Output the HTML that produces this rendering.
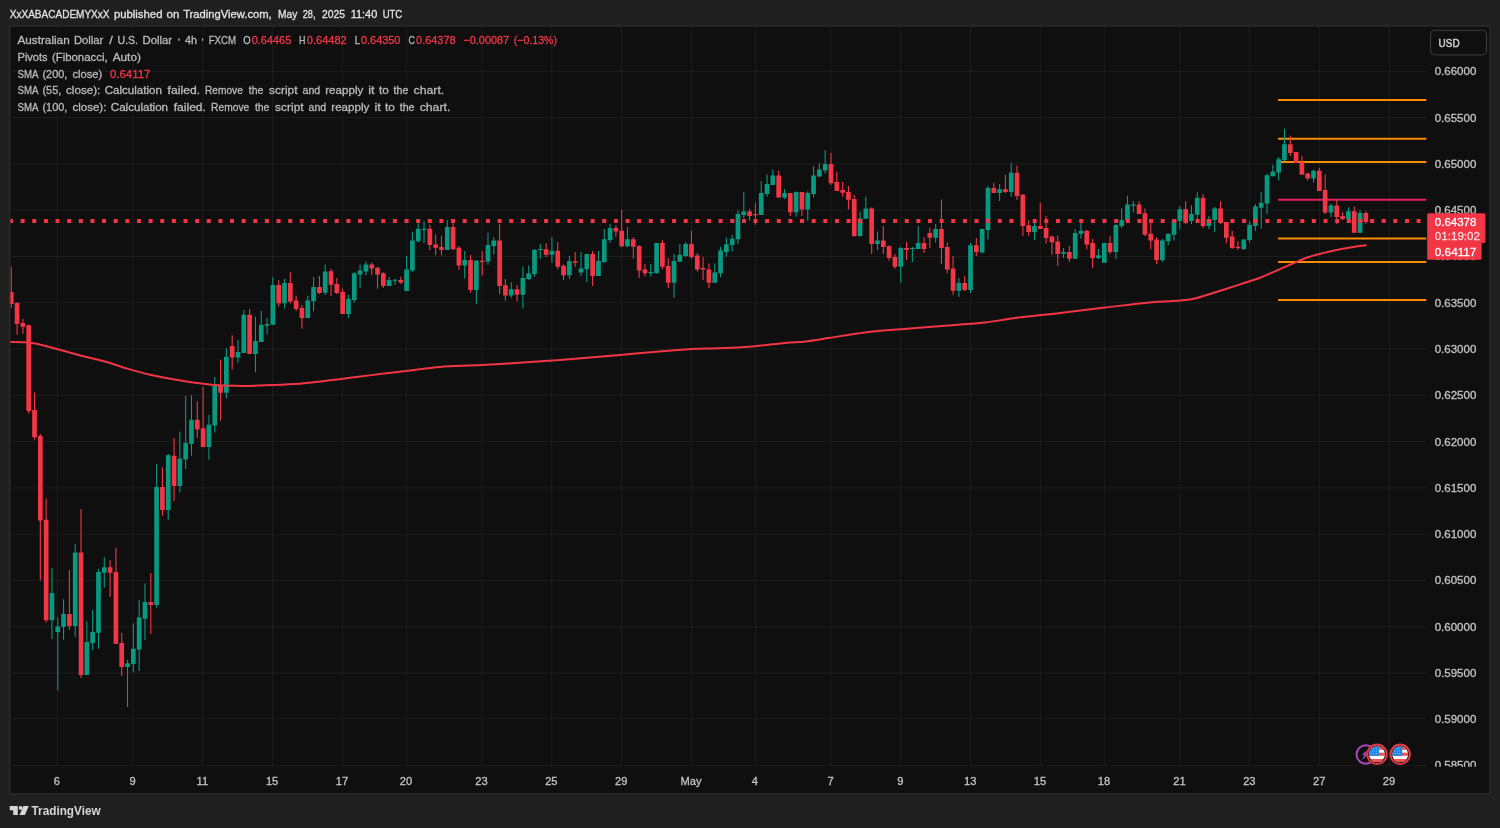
<!DOCTYPE html>
<html lang="en"><head><meta charset="utf-8"><title>AUDUSD 4h chart</title>
<style>html,body{margin:0;padding:0;background:#1f1f1f;}body{width:1500px;height:828px;overflow:hidden;}svg{display:block;will-change:transform;}text{font-family:"Liberation Sans",sans-serif;}</style>
</head><body>
<svg width="1500" height="828" viewBox="0 0 1500 828">
<rect x="0" y="0" width="1500" height="828" fill="#1f1f1f"/>
<rect x="9.70" y="26.00" width="1480.30" height="767.90" fill="#0f0f0f" stroke="#2c2c2c" stroke-width="1.4"/>
<defs><clipPath id="plot"><rect x="10.40" y="26.70" width="1415.90" height="739.00"/></clipPath></defs>
<g stroke="#ffffff" stroke-opacity="0.058" stroke-width="1" fill="none">
<line x1="57.30" y1="26.70" x2="57.30" y2="765.70"/>
<line x1="132.92" y1="26.70" x2="132.92" y2="765.70"/>
<line x1="202.72" y1="26.70" x2="202.72" y2="765.70"/>
<line x1="272.52" y1="26.70" x2="272.52" y2="765.70"/>
<line x1="342.33" y1="26.70" x2="342.33" y2="765.70"/>
<line x1="406.32" y1="26.70" x2="406.32" y2="765.70"/>
<line x1="481.94" y1="26.70" x2="481.94" y2="765.70"/>
<line x1="551.74" y1="26.70" x2="551.74" y2="765.70"/>
<line x1="621.54" y1="26.70" x2="621.54" y2="765.70"/>
<line x1="691.35" y1="26.70" x2="691.35" y2="765.70"/>
<line x1="755.34" y1="26.70" x2="755.34" y2="765.70"/>
<line x1="830.96" y1="26.70" x2="830.96" y2="765.70"/>
<line x1="900.76" y1="26.70" x2="900.76" y2="765.70"/>
<line x1="970.57" y1="26.70" x2="970.57" y2="765.70"/>
<line x1="1040.37" y1="26.70" x2="1040.37" y2="765.70"/>
<line x1="1104.36" y1="26.70" x2="1104.36" y2="765.70"/>
<line x1="1179.98" y1="26.70" x2="1179.98" y2="765.70"/>
<line x1="1249.78" y1="26.70" x2="1249.78" y2="765.70"/>
<line x1="1319.59" y1="26.70" x2="1319.59" y2="765.70"/>
<line x1="1389.39" y1="26.70" x2="1389.39" y2="765.70"/>
<line x1="10.40" y1="71.30" x2="1426.30" y2="71.30"/>
<line x1="10.40" y1="117.59" x2="1426.30" y2="117.59"/>
<line x1="10.40" y1="163.88" x2="1426.30" y2="163.88"/>
<line x1="10.40" y1="210.17" x2="1426.30" y2="210.17"/>
<line x1="10.40" y1="256.46" x2="1426.30" y2="256.46"/>
<line x1="10.40" y1="302.75" x2="1426.30" y2="302.75"/>
<line x1="10.40" y1="349.04" x2="1426.30" y2="349.04"/>
<line x1="10.40" y1="395.33" x2="1426.30" y2="395.33"/>
<line x1="10.40" y1="441.62" x2="1426.30" y2="441.62"/>
<line x1="10.40" y1="487.91" x2="1426.30" y2="487.91"/>
<line x1="10.40" y1="534.20" x2="1426.30" y2="534.20"/>
<line x1="10.40" y1="580.49" x2="1426.30" y2="580.49"/>
<line x1="10.40" y1="626.78" x2="1426.30" y2="626.78"/>
<line x1="10.40" y1="673.07" x2="1426.30" y2="673.07"/>
<line x1="10.40" y1="718.76" x2="1426.30" y2="718.76"/>
<line x1="10.40" y1="765.65" x2="1426.30" y2="765.65"/>
</g>
<g stroke-width="2" fill="none">
<line x1="1278.1" y1="100.00" x2="1426.3" y2="100.00" stroke="#fb8c00"/>
<line x1="1278.1" y1="138.70" x2="1426.3" y2="138.70" stroke="#fb8c00"/>
<line x1="1278.1" y1="162.10" x2="1426.3" y2="162.10" stroke="#fb8c00"/>
<line x1="1278.1" y1="199.70" x2="1426.3" y2="199.70" stroke="#e91e63"/>
<line x1="1278.1" y1="238.60" x2="1426.3" y2="238.60" stroke="#fb8c00"/>
<line x1="1278.1" y1="262.00" x2="1426.3" y2="262.00" stroke="#fb8c00"/>
<line x1="1278.1" y1="299.90" x2="1426.3" y2="299.90" stroke="#fb8c00"/>
</g>
<g clip-path="url(#plot)">
<path d="M51.96 568.00V638.90M57.77 617.60V690.40M63.58 599.20V639.70M75.21 544.00V636.80M86.84 621.30V674.90M92.65 609.80V649.90M98.47 569.10V648.80M104.28 557.30V587.70M127.53 660.00V706.90M133.35 623.20V672.00M139.16 600.00V670.90M144.98 583.50V640.00M156.60 464.30V607.80M168.23 454.00V519.70M179.86 431.40V492.50M185.67 396.00V469.10M191.48 395.20V455.70M208.93 415.00V459.70M214.74 377.10V432.50M226.37 348.00V398.40M237.99 340.00V362.70M243.81 309.90V353.10M255.44 316.80V372.30M261.25 310.90V342.10M267.06 318.00V334.40M272.88 277.10V324.80M284.50 278.90V308.40M307.76 295.70V318.00M313.57 277.10V311.20M325.20 264.50V294.90M348.45 294.70V318.00M354.27 272.30V302.60M360.08 264.50V288.00M365.90 261.60V275.20M389.15 277.10V286.10M394.96 278.90V284.80M406.59 256.00V290.90M412.41 231.70V271.70M418.22 223.20V242.40M424.03 220.80V243.20M447.29 220.00V249.90M464.73 250.90V278.40M476.36 260.00V303.70M487.98 232.50V264.80M493.80 237.20V254.80M511.24 282.00V297.70M522.87 266.80V308.40M528.68 265.50V279.90M534.49 248.90V276.40M540.31 244.10V258.80M551.93 237.20V262.80M569.38 256.10V279.10M581.00 252.10V276.10M586.82 254.00V282.30M598.44 251.10V276.10M604.26 228.90V262.80M610.07 224.10V243.10M627.51 227.10V247.30M650.77 263.90V276.40M656.58 243.10V273.20M674.02 254.00V297.70M679.84 244.10V261.70M685.65 242.00V256.90M714.72 263.60V282.80M720.53 246.80V277.20M726.35 237.40V256.70M732.16 234.70V251.50M737.97 210.40V244.00M743.79 192.00V217.90M761.23 181.10V214.90M767.04 174.40V196.80M772.85 169.60V185.10M784.48 189.10V198.90M796.11 191.20V216.80M807.74 191.20V220.80M813.55 165.90V197.60M819.36 162.90V177.30M825.18 149.90V173.60M860.06 212.00V236.80M865.87 196.80V218.70M877.50 231.50V250.10M900.76 246.80V283.10M912.38 246.90V262.00M918.20 226.00V248.90M935.64 224.10V242.50M958.89 278.00V296.90M970.52 243.10V292.90M982.15 228.90V253.20M987.96 186.00V239.60M999.59 183.90V200.90M1011.22 162.80V196.90M1034.47 222.80V239.90M1063.54 248.10V258.00M1075.17 228.90V258.80M1080.98 222.80V238.80M1098.42 248.90V259.10M1104.24 243.10V262.80M1115.86 224.10V259.10M1121.68 208.20V227.90M1127.49 195.80V220.10M1133.30 201.20V212.40M1162.37 239.10V262.00M1168.19 233.70V245.20M1174.00 219.10V240.40M1179.81 206.00V228.90M1191.44 205.20V224.10M1197.25 191.90V218.80M1208.88 216.10V228.90M1214.70 207.10V231.90M1243.76 239.20V250.00M1249.58 221.10V242.40M1255.39 204.00V230.90M1261.21 192.00V228.80M1267.02 173.60V214.10M1272.83 164.80V176.30M1278.65 157.10V180.50M1284.46 128.80V161.10M1313.53 169.60V182.40M1330.97 203.70V217.10M1348.41 207.20V218.90M1360.04 210.10V232.80" stroke="#089981" stroke-width="1.1" fill="none"/>
<path d="M11.26 266.70V308.00M17.07 302.50V334.70M22.89 319.00V333.70M28.70 324.50V413.60M34.51 392.40V439.80M40.33 434.00V580.50M46.14 498.40V622.40M69.40 570.10V629.90M81.02 509.10V677.90M110.09 560.00V597.10M115.91 547.70V643.70M121.72 633.10V676.00M150.79 573.00V634.10M162.42 467.20V515.70M174.04 438.10V501.10M197.30 401.20V438.10M203.11 386.90V446.90M220.55 359.70V420.80M232.18 335.20V369.60M249.62 309.10V353.90M278.69 280.00V306.40M290.32 272.30V303.50M296.13 295.70V311.00M301.94 305.10V328.80M319.39 276.00V294.00M331.01 269.10V296.00M336.83 277.90V294.00M342.64 288.80V313.90M371.71 262.40V275.20M377.52 266.90V288.80M383.34 272.30V288.00M400.78 276.80V284.00M429.85 224.80V250.10M435.66 234.40V255.20M441.47 235.50V255.20M453.10 223.20V250.10M458.91 246.10V269.90M470.54 254.90V292.80M482.17 250.90V275.50M499.61 224.10V294.00M505.42 279.10V300.70M517.05 284.90V301.50M546.12 243.10V256.90M557.75 242.00V269.50M563.56 264.40V280.10M575.19 252.10V266.80M592.63 251.10V286.00M615.88 225.20V236.70M621.70 210.00V247.30M633.33 237.20V258.80M639.14 245.20V278.00M644.95 263.90V276.40M662.39 240.10V269.50M668.21 258.00V287.90M691.46 230.80V258.80M697.28 252.90V271.60M703.09 256.90V280.10M708.90 263.60V287.90M749.60 209.10V220.80M755.41 202.40V224.80M778.67 170.40V197.60M790.30 193.10V216.00M801.92 192.00V216.00M830.99 153.10V185.10M836.81 171.50V190.90M842.62 182.10V196.80M848.43 186.10V209.60M854.25 194.90V236.80M871.69 207.20V253.90M883.31 225.90V253.90M889.13 245.60V260.80M894.94 253.90V268.70M906.57 242.00V259.90M924.01 237.20V252.90M929.82 227.80V248.10M941.45 199.60V263.90M947.27 242.20V273.50M953.08 255.90V294.80M964.71 275.90V291.10M976.33 238.00V256.10M993.78 182.80V192.90M1005.40 175.10V192.90M1017.03 165.70V199.90M1022.84 194.00V235.90M1028.66 220.10V235.90M1040.28 202.50V228.90M1046.10 216.10V243.60M1051.91 235.60V254.80M1057.73 235.60V266.00M1069.35 246.00V262.00M1086.79 230.00V249.20M1092.61 239.10V267.90M1110.05 236.10V254.00M1139.12 201.20V214.00M1144.93 208.40V235.90M1150.75 220.10V249.20M1156.56 237.20V263.90M1185.63 201.20V224.10M1203.07 194.00V227.90M1220.51 201.20V224.10M1226.32 222.00V243.30M1232.14 230.80V248.90M1237.95 241.20V250.00M1290.27 135.70V156.00M1296.09 152.00V162.90M1301.90 156.00V174.70M1307.72 172.50V180.50M1319.34 167.70V190.90M1325.16 174.40V214.10M1336.78 200.00V224.00M1342.60 212.00V220.00M1354.22 206.40V232.80M1365.85 211.20V224.00" stroke="#f23645" stroke-width="1.1" fill="none"/>
<path d="M49.61 593.10h4.70v27.20h-4.70zM55.42 626.40h4.70v5.60h-4.70zM61.23 613.90h4.70v13.00h-4.70zM72.86 552.50h4.70v73.60h-4.70zM84.49 641.90h4.70v33.00h-4.70zM90.30 632.00h4.70v10.90h-4.70zM96.12 572.00h4.70v60.80h-4.70zM101.93 567.20h4.70v5.60h-4.70zM125.18 663.20h4.70v3.70h-4.70zM131.00 648.80h4.70v15.20h-4.70zM136.81 617.60h4.70v32.00h-4.70zM142.63 602.00h4.70v16.70h-4.70zM154.25 486.90h4.70v118.00h-4.70zM165.88 455.20h4.70v54.90h-4.70zM177.51 458.70h4.70v27.20h-4.70zM183.32 442.90h4.70v16.60h-4.70zM189.13 419.80h4.70v24.20h-4.70zM206.58 424.80h4.70v22.10h-4.70zM212.39 385.90h4.70v39.70h-4.70zM224.02 356.80h4.70v36.00h-4.70zM235.64 352.00h4.70v5.60h-4.70zM241.46 314.70h4.70v38.40h-4.70zM253.09 341.10h4.70v12.80h-4.70zM258.90 324.80h4.70v17.30h-4.70zM264.71 324.00h4.70v1.80h-4.70zM270.53 285.10h4.70v39.70h-4.70zM282.15 282.90h4.70v20.30h-4.70zM305.41 300.60h4.70v17.40h-4.70zM311.22 286.90h4.70v14.40h-4.70zM322.85 271.50h4.70v21.30h-4.70zM346.10 298.90h4.70v15.00h-4.70zM351.92 273.30h4.70v26.70h-4.70zM357.73 270.40h4.70v4.00h-4.70zM363.55 264.50h4.70v7.00h-4.70zM386.80 280.00h4.70v6.10h-4.70zM392.61 279.70h4.70v1.10h-4.70zM404.24 269.60h4.70v21.30h-4.70zM410.06 240.50h4.70v29.90h-4.70zM415.87 228.80h4.70v12.50h-4.70zM421.68 228.80h4.70v1.20h-4.70zM444.94 226.90h4.70v23.00h-4.70zM462.38 260.00h4.70v5.60h-4.70zM474.01 260.80h4.70v29.10h-4.70zM485.63 245.10h4.70v16.50h-4.70zM491.45 240.40h4.70v5.60h-4.70zM508.89 289.20h4.70v6.40h-4.70zM520.52 278.00h4.70v16.80h-4.70zM526.33 273.50h4.70v5.60h-4.70zM532.14 250.00h4.70v24.00h-4.70zM537.96 248.90h4.70v1.10h-4.70zM549.58 250.80h4.70v4.00h-4.70zM567.03 261.20h4.70v14.10h-4.70zM578.65 268.40h4.70v4.00h-4.70zM584.47 254.00h4.70v15.20h-4.70zM596.09 260.90h4.70v15.20h-4.70zM601.91 239.30h4.70v22.70h-4.70zM607.72 227.90h4.70v12.20h-4.70zM625.16 239.30h4.70v7.00h-4.70zM648.42 272.10h4.70v1.10h-4.70zM654.23 243.10h4.70v30.10h-4.70zM671.67 260.90h4.70v21.90h-4.70zM677.49 254.80h4.70v6.90h-4.70zM683.30 244.10h4.70v12.00h-4.70zM712.37 272.40h4.70v10.40h-4.70zM718.18 250.60h4.70v22.60h-4.70zM724.00 244.20h4.70v7.80h-4.70zM729.81 238.70h4.70v6.40h-4.70zM735.62 214.10h4.70v25.10h-4.70zM741.44 211.50h4.70v3.40h-4.70zM758.88 193.10h4.70v21.80h-4.70zM764.69 184.00h4.70v9.90h-4.70zM770.50 175.50h4.70v9.60h-4.70zM782.13 193.10h4.70v4.50h-4.70zM793.76 192.00h4.70v20.30h-4.70zM805.39 193.10h4.70v16.50h-4.70zM811.20 175.50h4.70v18.40h-4.70zM817.01 169.60h4.70v6.90h-4.70zM822.83 164.00h4.70v6.40h-4.70zM857.71 218.40h4.70v17.60h-4.70zM863.52 208.50h4.70v10.20h-4.70zM875.15 240.50h4.70v3.50h-4.70zM898.41 248.10h4.70v18.70h-4.70zM910.03 248.00h4.70v1.00h-4.70zM915.85 243.10h4.70v5.80h-4.70zM933.29 229.00h4.70v8.70h-4.70zM956.54 283.10h4.70v7.70h-4.70zM968.17 245.20h4.70v44.80h-4.70zM979.80 228.90h4.70v23.50h-4.70zM985.61 187.90h4.70v42.10h-4.70zM997.24 189.20h4.70v3.70h-4.70zM1008.87 172.70h4.70v19.20h-4.70zM1032.12 226.00h4.70v5.90h-4.70zM1061.19 252.10h4.70v1.60h-4.70zM1072.82 232.90h4.70v25.90h-4.70zM1078.63 230.80h4.70v2.90h-4.70zM1096.07 255.30h4.70v2.70h-4.70zM1101.89 243.10h4.70v19.70h-4.70zM1113.51 224.90h4.70v27.20h-4.70zM1119.33 220.10h4.70v5.90h-4.70zM1125.14 204.60h4.70v15.50h-4.70zM1130.95 204.40h4.70v1.30h-4.70zM1160.02 240.40h4.70v19.70h-4.70zM1165.84 233.70h4.70v7.50h-4.70zM1171.65 220.10h4.70v14.70h-4.70zM1177.46 209.20h4.70v11.70h-4.70zM1189.09 214.00h4.70v6.90h-4.70zM1194.90 197.70h4.70v17.10h-4.70zM1206.53 219.10h4.70v6.90h-4.70zM1212.35 208.40h4.70v11.70h-4.70zM1241.41 239.40h4.70v9.60h-4.70zM1247.23 224.80h4.70v15.20h-4.70zM1253.04 206.40h4.70v19.50h-4.70zM1258.86 202.70h4.70v5.00h-4.70zM1264.67 175.20h4.70v28.30h-4.70zM1270.48 171.50h4.70v4.80h-4.70zM1276.30 159.20h4.70v13.30h-4.70zM1282.11 144.30h4.70v15.70h-4.70zM1311.18 170.70h4.70v7.70h-4.70zM1328.62 205.60h4.70v6.90h-4.70zM1346.06 211.20h4.70v7.70h-4.70zM1357.69 213.10h4.70v19.70h-4.70z" fill="#089981"/>
<path d="M8.91 292.00h4.70v12.00h-4.70zM14.72 303.00h4.70v21.00h-4.70zM20.54 323.00h4.70v3.70h-4.70zM26.35 325.30h4.70v85.70h-4.70zM32.16 410.00h4.70v27.30h-4.70zM37.98 436.00h4.70v84.60h-4.70zM43.79 519.80h4.70v100.50h-4.70zM67.05 613.90h4.70v12.10h-4.70zM78.67 552.50h4.70v122.40h-4.70zM107.74 567.20h4.70v5.60h-4.70zM113.56 572.00h4.70v71.70h-4.70zM119.37 642.90h4.70v24.00h-4.70zM148.44 602.00h4.70v3.00h-4.70zM160.07 486.90h4.70v23.20h-4.70zM171.69 455.70h4.70v30.20h-4.70zM194.95 419.80h4.70v9.70h-4.70zM200.76 428.30h4.70v18.60h-4.70zM218.20 385.90h4.70v6.90h-4.70zM229.83 346.10h4.70v11.50h-4.70zM247.27 314.70h4.70v39.20h-4.70zM276.34 285.10h4.70v18.10h-4.70zM287.97 282.90h4.70v18.60h-4.70zM293.78 300.50h4.70v8.40h-4.70zM299.59 308.10h4.70v9.90h-4.70zM317.04 286.90h4.70v6.20h-4.70zM328.66 271.20h4.70v13.60h-4.70zM334.48 284.00h4.70v9.10h-4.70zM340.29 292.00h4.70v21.90h-4.70zM369.36 264.50h4.70v4.00h-4.70zM375.17 267.70h4.70v6.70h-4.70zM380.99 273.30h4.70v12.80h-4.70zM398.43 280.00h4.70v2.40h-4.70zM427.50 228.80h4.70v16.30h-4.70zM433.31 244.50h4.70v3.20h-4.70zM439.12 246.90h4.70v3.00h-4.70zM450.75 226.90h4.70v22.40h-4.70zM456.56 247.70h4.70v17.90h-4.70zM468.19 260.00h4.70v29.90h-4.70zM479.82 260.80h4.70v1.30h-4.70zM497.26 240.40h4.70v45.60h-4.70zM503.07 285.20h4.70v10.40h-4.70zM514.70 289.20h4.70v5.60h-4.70zM543.77 249.20h4.70v5.60h-4.70zM555.40 250.80h4.70v16.00h-4.70zM561.21 265.70h4.70v9.60h-4.70zM572.84 261.20h4.70v1.60h-4.70zM590.28 254.00h4.70v22.10h-4.70zM613.53 227.90h4.70v3.70h-4.70zM619.35 230.80h4.70v15.50h-4.70zM630.98 239.30h4.70v7.50h-4.70zM636.79 246.00h4.70v24.50h-4.70zM642.60 269.50h4.70v3.70h-4.70zM660.04 243.10h4.70v23.70h-4.70zM665.86 266.00h4.70v16.80h-4.70zM689.11 244.10h4.70v12.80h-4.70zM694.93 255.60h4.70v13.90h-4.70zM700.74 268.10h4.70v1.40h-4.70zM706.55 269.50h4.70v13.30h-4.70zM747.25 211.50h4.70v4.50h-4.70zM753.06 213.90h4.70v1.30h-4.70zM776.32 175.50h4.70v22.10h-4.70zM787.95 193.10h4.70v19.20h-4.70zM799.57 192.00h4.70v17.60h-4.70zM828.64 164.00h4.70v19.20h-4.70zM834.46 182.10h4.70v8.80h-4.70zM840.27 190.10h4.70v2.70h-4.70zM846.08 192.00h4.70v7.70h-4.70zM851.90 198.90h4.70v37.10h-4.70zM869.34 208.50h4.70v35.50h-4.70zM880.96 240.50h4.70v6.40h-4.70zM886.78 246.10h4.70v12.00h-4.70zM892.59 257.10h4.70v9.70h-4.70zM904.22 248.00h4.70v2.00h-4.70zM921.66 243.10h4.70v5.80h-4.70zM927.47 232.90h4.70v4.80h-4.70zM939.10 229.00h4.70v19.10h-4.70zM944.92 247.10h4.70v22.40h-4.70zM950.73 268.40h4.70v22.40h-4.70zM962.36 283.10h4.70v6.90h-4.70zM973.98 245.20h4.70v6.90h-4.70zM991.43 187.90h4.70v5.00h-4.70zM1003.05 189.20h4.70v2.70h-4.70zM1014.68 172.70h4.70v23.30h-4.70zM1020.49 194.80h4.70v31.20h-4.70zM1026.31 225.20h4.70v6.70h-4.70zM1037.93 226.00h4.70v2.90h-4.70zM1043.75 227.90h4.70v10.10h-4.70zM1049.56 236.40h4.70v5.90h-4.70zM1055.38 241.50h4.70v12.50h-4.70zM1067.00 252.10h4.70v6.70h-4.70zM1084.44 230.80h4.70v13.60h-4.70zM1090.26 243.10h4.70v14.90h-4.70zM1107.70 243.10h4.70v9.00h-4.70zM1136.77 204.40h4.70v9.60h-4.70zM1142.58 213.20h4.70v21.60h-4.70zM1148.40 233.70h4.70v6.70h-4.70zM1154.21 239.60h4.70v20.50h-4.70zM1183.28 209.20h4.70v13.60h-4.70zM1200.72 197.70h4.70v28.30h-4.70zM1218.16 208.40h4.70v14.40h-4.70zM1223.97 222.00h4.70v15.70h-4.70zM1229.79 236.40h4.70v11.70h-4.70zM1235.60 246.80h4.70v1.10h-4.70zM1287.92 144.30h4.70v8.80h-4.70zM1293.74 152.00h4.70v10.90h-4.70zM1299.55 161.90h4.70v12.80h-4.70zM1305.37 173.60h4.70v4.80h-4.70zM1316.99 170.70h4.70v20.20h-4.70zM1322.81 189.90h4.70v22.60h-4.70zM1334.43 205.60h4.70v11.50h-4.70zM1340.25 216.00h4.70v2.90h-4.70zM1351.87 211.20h4.70v21.60h-4.70zM1363.50 213.10h4.70v8.80h-4.70z" fill="#f23645"/>
<path d="M8.00 342.00C12.00 342.17 23.70 341.78 32.00 343.00C40.30 344.22 49.22 347.10 57.80 349.30C66.38 351.50 75.20 354.05 83.50 356.20C91.80 358.35 100.18 360.08 107.60 362.20C115.02 364.32 120.93 366.82 128.00 368.90C135.07 370.98 141.00 372.72 150.00 374.70C159.00 376.68 171.33 379.08 182.00 380.80C192.67 382.52 204.33 384.15 214.00 385.00C223.67 385.85 232.33 385.82 240.00 385.90C247.67 385.98 251.00 385.82 260.00 385.50C269.00 385.18 283.00 384.78 294.00 384.00C305.00 383.22 315.33 382.00 326.00 380.80C336.67 379.60 349.00 377.92 358.00 376.80C367.00 375.68 371.33 375.15 380.00 374.10C388.67 373.05 400.00 371.70 410.00 370.50C420.00 369.30 428.00 367.80 440.00 366.90C452.00 366.00 467.00 365.90 482.00 365.10C497.00 364.30 514.50 363.15 530.00 362.10C545.50 361.05 560.00 360.00 575.00 358.80C590.00 357.60 605.00 356.20 620.00 354.90C635.00 353.60 653.00 352.00 665.00 351.00C677.00 350.00 682.00 349.40 692.00 348.90C702.00 348.40 714.50 348.45 725.00 348.00C735.50 347.55 745.00 347.05 755.00 346.20C765.00 345.35 776.50 343.70 785.00 342.90C793.50 342.10 798.50 342.25 806.00 341.40C813.50 340.55 820.17 339.30 830.00 337.80C839.83 336.30 851.67 333.95 865.00 332.40C878.33 330.85 895.00 329.75 910.00 328.50C925.00 327.25 942.50 325.90 955.00 324.90C967.50 323.90 975.00 323.65 985.00 322.50C995.00 321.35 1002.50 319.60 1015.00 318.00C1027.50 316.40 1045.00 314.65 1060.00 312.90C1075.00 311.15 1090.00 309.25 1105.00 307.50C1120.00 305.75 1137.50 303.55 1150.00 302.40C1162.50 301.25 1172.50 301.25 1180.00 300.60C1187.50 299.95 1190.00 299.60 1195.00 298.50C1200.00 297.40 1202.50 296.35 1210.00 294.00C1217.50 291.65 1231.67 287.12 1240.00 284.40C1248.33 281.68 1254.00 279.97 1260.00 277.70C1266.00 275.43 1270.67 273.10 1276.00 270.80C1281.33 268.50 1286.67 266.17 1292.00 263.90C1297.33 261.63 1302.67 259.03 1308.00 257.20C1313.33 255.37 1318.67 254.23 1324.00 252.90C1329.33 251.57 1334.67 250.27 1340.00 249.20C1345.33 248.13 1351.68 247.17 1356.00 246.50C1360.32 245.83 1364.25 245.42 1365.90 245.20" fill="none" stroke="#f23645" stroke-width="2" stroke-linejoin="round" stroke-linecap="round"/>
</g>
<path d="M1416.60 219h4v4h-4zM1404.97 219h4v4h-4zM1393.33 219h4v4h-4zM1381.70 219h4v4h-4zM1370.07 219h4v4h-4zM1358.43 219h4v4h-4zM1346.80 219h4v4h-4zM1335.17 219h4v4h-4zM1323.54 219h4v4h-4zM1311.90 219h4v4h-4zM1300.27 219h4v4h-4zM1288.64 219h4v4h-4zM1277.00 219h4v4h-4zM1265.37 219h4v4h-4zM1253.74 219h4v4h-4zM1242.10 219h4v4h-4zM1230.47 219h4v4h-4zM1218.84 219h4v4h-4zM1207.21 219h4v4h-4zM1195.57 219h4v4h-4zM1183.94 219h4v4h-4zM1172.31 219h4v4h-4zM1160.67 219h4v4h-4zM1149.04 219h4v4h-4zM1137.41 219h4v4h-4zM1125.77 219h4v4h-4zM1114.14 219h4v4h-4zM1102.51 219h4v4h-4zM1090.88 219h4v4h-4zM1079.24 219h4v4h-4zM1067.61 219h4v4h-4zM1055.98 219h4v4h-4zM1044.34 219h4v4h-4zM1032.71 219h4v4h-4zM1021.08 219h4v4h-4zM1009.44 219h4v4h-4zM997.81 219h4v4h-4zM986.18 219h4v4h-4zM974.55 219h4v4h-4zM962.91 219h4v4h-4zM951.28 219h4v4h-4zM939.65 219h4v4h-4zM928.01 219h4v4h-4zM916.38 219h4v4h-4zM904.75 219h4v4h-4zM893.11 219h4v4h-4zM881.48 219h4v4h-4zM869.85 219h4v4h-4zM858.22 219h4v4h-4zM846.58 219h4v4h-4zM834.95 219h4v4h-4zM823.32 219h4v4h-4zM811.68 219h4v4h-4zM800.05 219h4v4h-4zM788.42 219h4v4h-4zM776.78 219h4v4h-4zM765.15 219h4v4h-4zM753.52 219h4v4h-4zM741.89 219h4v4h-4zM730.25 219h4v4h-4zM718.62 219h4v4h-4zM706.99 219h4v4h-4zM695.35 219h4v4h-4zM683.72 219h4v4h-4zM672.09 219h4v4h-4zM660.45 219h4v4h-4zM648.82 219h4v4h-4zM637.19 219h4v4h-4zM625.56 219h4v4h-4zM613.92 219h4v4h-4zM602.29 219h4v4h-4zM590.66 219h4v4h-4zM579.02 219h4v4h-4zM567.39 219h4v4h-4zM555.76 219h4v4h-4zM544.12 219h4v4h-4zM532.49 219h4v4h-4zM520.86 219h4v4h-4zM509.23 219h4v4h-4zM497.59 219h4v4h-4zM485.96 219h4v4h-4zM474.33 219h4v4h-4zM462.69 219h4v4h-4zM451.06 219h4v4h-4zM439.43 219h4v4h-4zM427.79 219h4v4h-4zM416.16 219h4v4h-4zM404.53 219h4v4h-4zM392.90 219h4v4h-4zM381.26 219h4v4h-4zM369.63 219h4v4h-4zM358.00 219h4v4h-4zM346.36 219h4v4h-4zM334.73 219h4v4h-4zM323.10 219h4v4h-4zM311.46 219h4v4h-4zM299.83 219h4v4h-4zM288.20 219h4v4h-4zM276.57 219h4v4h-4zM264.93 219h4v4h-4zM253.30 219h4v4h-4zM241.67 219h4v4h-4zM230.03 219h4v4h-4zM218.40 219h4v4h-4zM206.77 219h4v4h-4zM195.13 219h4v4h-4zM183.50 219h4v4h-4zM171.87 219h4v4h-4zM160.24 219h4v4h-4zM148.60 219h4v4h-4zM136.97 219h4v4h-4zM125.34 219h4v4h-4zM113.70 219h4v4h-4zM102.07 219h4v4h-4zM90.44 219h4v4h-4zM78.80 219h4v4h-4zM67.17 219h4v4h-4zM55.54 219h4v4h-4zM43.91 219h4v4h-4zM32.27 219h4v4h-4zM20.64 219h4v4h-4zM9.01 219h4v4h-4z" fill="#f23645" clip-path="url(#plot)"/>
<defs><clipPath id="axis"><rect x="1426.3" y="27" width="64" height="739.80"/></clipPath></defs>
<g clip-path="url(#axis)">
<text x="1434.70" y="75.25" font-size="11.50" fill="#c4c4c4" stroke="#c4c4c4" stroke-width="0.30" textLength="41.60" lengthAdjust="spacingAndGlyphs">0.66000</text>
<text x="1434.70" y="121.54" font-size="11.50" fill="#c4c4c4" stroke="#c4c4c4" stroke-width="0.30" textLength="41.60" lengthAdjust="spacingAndGlyphs">0.65500</text>
<text x="1434.70" y="167.83" font-size="11.50" fill="#c4c4c4" stroke="#c4c4c4" stroke-width="0.30" textLength="41.60" lengthAdjust="spacingAndGlyphs">0.65000</text>
<text x="1434.70" y="214.12" font-size="11.50" fill="#c4c4c4" stroke="#c4c4c4" stroke-width="0.30" textLength="41.60" lengthAdjust="spacingAndGlyphs">0.64500</text>
<text x="1434.70" y="260.41" font-size="11.50" fill="#c4c4c4" stroke="#c4c4c4" stroke-width="0.30" textLength="41.60" lengthAdjust="spacingAndGlyphs">0.64000</text>
<text x="1434.70" y="306.70" font-size="11.50" fill="#c4c4c4" stroke="#c4c4c4" stroke-width="0.30" textLength="41.60" lengthAdjust="spacingAndGlyphs">0.63500</text>
<text x="1434.70" y="352.99" font-size="11.50" fill="#c4c4c4" stroke="#c4c4c4" stroke-width="0.30" textLength="41.60" lengthAdjust="spacingAndGlyphs">0.63000</text>
<text x="1434.70" y="399.28" font-size="11.50" fill="#c4c4c4" stroke="#c4c4c4" stroke-width="0.30" textLength="41.60" lengthAdjust="spacingAndGlyphs">0.62500</text>
<text x="1434.70" y="445.57" font-size="11.50" fill="#c4c4c4" stroke="#c4c4c4" stroke-width="0.30" textLength="41.60" lengthAdjust="spacingAndGlyphs">0.62000</text>
<text x="1434.70" y="491.86" font-size="11.50" fill="#c4c4c4" stroke="#c4c4c4" stroke-width="0.30" textLength="41.60" lengthAdjust="spacingAndGlyphs">0.61500</text>
<text x="1434.70" y="538.15" font-size="11.50" fill="#c4c4c4" stroke="#c4c4c4" stroke-width="0.30" textLength="41.60" lengthAdjust="spacingAndGlyphs">0.61000</text>
<text x="1434.70" y="584.44" font-size="11.50" fill="#c4c4c4" stroke="#c4c4c4" stroke-width="0.30" textLength="41.60" lengthAdjust="spacingAndGlyphs">0.60500</text>
<text x="1434.70" y="630.73" font-size="11.50" fill="#c4c4c4" stroke="#c4c4c4" stroke-width="0.30" textLength="41.60" lengthAdjust="spacingAndGlyphs">0.60000</text>
<text x="1434.70" y="677.02" font-size="11.50" fill="#c4c4c4" stroke="#c4c4c4" stroke-width="0.30" textLength="41.60" lengthAdjust="spacingAndGlyphs">0.59500</text>
<text x="1434.70" y="722.71" font-size="11.50" fill="#c4c4c4" stroke="#c4c4c4" stroke-width="0.30" textLength="41.60" lengthAdjust="spacingAndGlyphs">0.59000</text>
<text x="1434.70" y="769.20" font-size="11.50" fill="#c4c4c4" stroke="#c4c4c4" stroke-width="0.30" textLength="41.60" lengthAdjust="spacingAndGlyphs">0.58500</text>
</g>
<rect x="1427.2" y="213.2" width="58.2" height="29.8" rx="1.5" fill="#f23645"/>
<text x="1434.80" y="225.70" font-size="11.50" fill="#ffffff" stroke="#ffffff" stroke-width="0.30" textLength="41.60" lengthAdjust="spacingAndGlyphs">0.64378</text>
<text x="1434.80" y="239.50" font-size="11.50" fill="#ffffff" stroke="#ffffff" stroke-width="0.30" textLength="45.20" lengthAdjust="spacingAndGlyphs" fill-opacity="0.72" stroke-opacity="0.72">01:19:02</text>
<rect x="1427.2" y="242.0" width="54.4" height="17.8" rx="1.5" fill="#f23645"/>
<text x="1434.80" y="255.90" font-size="11.50" fill="#ffffff" stroke="#ffffff" stroke-width="0.30" textLength="41.60" lengthAdjust="spacingAndGlyphs">0.64117</text>
<rect x="1430.5" y="30.3" width="56" height="24.6" rx="4" fill="none" stroke="#3d3d3d" stroke-width="1"/>
<text x="1438.60" y="47.40" font-size="11.50" fill="#d0d0d0" stroke="#d0d0d0" stroke-width="0.50" textLength="21.00" lengthAdjust="spacingAndGlyphs">USD</text>
<text x="53.79" y="784.60" font-size="11.50" fill="#c4c4c4" stroke="#c4c4c4" stroke-width="0.30" textLength="6.21" lengthAdjust="spacingAndGlyphs">6</text>
<text x="129.41" y="784.60" font-size="11.50" fill="#c4c4c4" stroke="#c4c4c4" stroke-width="0.30" textLength="6.21" lengthAdjust="spacingAndGlyphs">9</text>
<text x="196.53" y="784.60" font-size="11.50" fill="#c4c4c4" stroke="#c4c4c4" stroke-width="0.30" textLength="11.58" lengthAdjust="spacingAndGlyphs">11</text>
<text x="265.92" y="784.60" font-size="11.50" fill="#c4c4c4" stroke="#c4c4c4" stroke-width="0.30" textLength="12.41" lengthAdjust="spacingAndGlyphs">15</text>
<text x="335.72" y="784.60" font-size="11.50" fill="#c4c4c4" stroke="#c4c4c4" stroke-width="0.30" textLength="12.41" lengthAdjust="spacingAndGlyphs">17</text>
<text x="399.71" y="784.60" font-size="11.50" fill="#c4c4c4" stroke="#c4c4c4" stroke-width="0.30" textLength="12.41" lengthAdjust="spacingAndGlyphs">20</text>
<text x="475.33" y="784.60" font-size="11.50" fill="#c4c4c4" stroke="#c4c4c4" stroke-width="0.30" textLength="12.41" lengthAdjust="spacingAndGlyphs">23</text>
<text x="545.13" y="784.60" font-size="11.50" fill="#c4c4c4" stroke="#c4c4c4" stroke-width="0.30" textLength="12.41" lengthAdjust="spacingAndGlyphs">25</text>
<text x="614.94" y="784.60" font-size="11.50" fill="#c4c4c4" stroke="#c4c4c4" stroke-width="0.30" textLength="12.41" lengthAdjust="spacingAndGlyphs">29</text>
<text x="680.41" y="784.60" font-size="11.50" fill="#c4c4c4" stroke="#c4c4c4" stroke-width="0.30" textLength="21.08" lengthAdjust="spacingAndGlyphs">May</text>
<text x="751.83" y="784.60" font-size="11.50" fill="#c4c4c4" stroke="#c4c4c4" stroke-width="0.30" textLength="6.21" lengthAdjust="spacingAndGlyphs">4</text>
<text x="827.45" y="784.60" font-size="11.50" fill="#c4c4c4" stroke="#c4c4c4" stroke-width="0.30" textLength="6.21" lengthAdjust="spacingAndGlyphs">7</text>
<text x="897.26" y="784.60" font-size="11.50" fill="#c4c4c4" stroke="#c4c4c4" stroke-width="0.30" textLength="6.21" lengthAdjust="spacingAndGlyphs">9</text>
<text x="963.96" y="784.60" font-size="11.50" fill="#c4c4c4" stroke="#c4c4c4" stroke-width="0.30" textLength="12.41" lengthAdjust="spacingAndGlyphs">13</text>
<text x="1033.76" y="784.60" font-size="11.50" fill="#c4c4c4" stroke="#c4c4c4" stroke-width="0.30" textLength="12.41" lengthAdjust="spacingAndGlyphs">15</text>
<text x="1097.75" y="784.60" font-size="11.50" fill="#c4c4c4" stroke="#c4c4c4" stroke-width="0.30" textLength="12.41" lengthAdjust="spacingAndGlyphs">18</text>
<text x="1173.37" y="784.60" font-size="11.50" fill="#c4c4c4" stroke="#c4c4c4" stroke-width="0.30" textLength="12.41" lengthAdjust="spacingAndGlyphs">21</text>
<text x="1243.17" y="784.60" font-size="11.50" fill="#c4c4c4" stroke="#c4c4c4" stroke-width="0.30" textLength="12.41" lengthAdjust="spacingAndGlyphs">23</text>
<text x="1312.98" y="784.60" font-size="11.50" fill="#c4c4c4" stroke="#c4c4c4" stroke-width="0.30" textLength="12.41" lengthAdjust="spacingAndGlyphs">27</text>
<text x="1382.78" y="784.60" font-size="11.50" fill="#c4c4c4" stroke="#c4c4c4" stroke-width="0.30" textLength="12.41" lengthAdjust="spacingAndGlyphs">29</text>
<text y="18.25" font-size="11.40" fill="#e4e4e4" stroke="#e4e4e4" stroke-width="0.30"><tspan x="9.80" textLength="99.68" lengthAdjust="spacingAndGlyphs">XxXABACADEMYXxX</tspan> <tspan x="113.90" textLength="48.61" lengthAdjust="spacingAndGlyphs">published</tspan> <tspan x="166.60" textLength="12.83" lengthAdjust="spacingAndGlyphs">on</tspan> <tspan x="183.20" textLength="88.52" lengthAdjust="spacingAndGlyphs">TradingView.com,</tspan> <tspan x="278.10" textLength="19.19" lengthAdjust="spacingAndGlyphs">May</tspan> <tspan x="302.70" textLength="12.80" lengthAdjust="spacingAndGlyphs">28,</tspan> <tspan x="321.90" textLength="23.05" lengthAdjust="spacingAndGlyphs">2025</tspan> <tspan x="350.70" textLength="26.58" lengthAdjust="spacingAndGlyphs">11:40</tspan> <tspan x="382.70" textLength="19.55" lengthAdjust="spacingAndGlyphs">UTC</tspan></text>
<text y="44.35" font-size="11.40" fill="#bcbcbc" stroke="#bcbcbc" stroke-width="0.30"><tspan x="17.50" textLength="52.16" lengthAdjust="spacingAndGlyphs">Australian</tspan> <tspan x="74.00" textLength="29.32" lengthAdjust="spacingAndGlyphs">Dollar</tspan> <tspan x="109.30" textLength="3.57" lengthAdjust="spacingAndGlyphs">/</tspan> <tspan x="117.50" textLength="20.55" lengthAdjust="spacingAndGlyphs">U.S.</tspan> <tspan x="142.50" textLength="29.62" lengthAdjust="spacingAndGlyphs">Dollar</tspan> <tspan x="178.00" dy="-0.90" textLength="1.92" lengthAdjust="spacingAndGlyphs" stroke-width="1.1">·</tspan> <tspan x="184.90" dy="0.90" textLength="12.02" lengthAdjust="spacingAndGlyphs">4h</tspan> <tspan x="201.50" dy="-0.90" textLength="2.12" lengthAdjust="spacingAndGlyphs" stroke-width="1.1">·</tspan> <tspan x="208.70" dy="0.90" textLength="27.43" lengthAdjust="spacingAndGlyphs">FXCM</tspan> <tspan x="243.30" textLength="7.38" lengthAdjust="spacingAndGlyphs">O</tspan> <tspan x="251.70" textLength="39.55" lengthAdjust="spacingAndGlyphs" fill="#f23645" stroke="#f23645">0.64465</tspan> <tspan x="299.10" textLength="6.42" lengthAdjust="spacingAndGlyphs">H</tspan> <tspan x="306.80" textLength="39.95" lengthAdjust="spacingAndGlyphs" fill="#f23645" stroke="#f23645">0.64482</tspan> <tspan x="354.70" textLength="4.87" lengthAdjust="spacingAndGlyphs">L</tspan> <tspan x="361.00" textLength="39.45" lengthAdjust="spacingAndGlyphs" fill="#f23645" stroke="#f23645">0.64350</tspan> <tspan x="408.40" textLength="6.32" lengthAdjust="spacingAndGlyphs">C</tspan> <tspan x="416.10" textLength="39.45" lengthAdjust="spacingAndGlyphs" fill="#f23645" stroke="#f23645">0.64378</tspan> <tspan x="463.40" textLength="45.78" lengthAdjust="spacingAndGlyphs" fill="#f23645" stroke="#f23645">−0.00087</tspan> <tspan x="513.80" textLength="43.25" lengthAdjust="spacingAndGlyphs" fill="#f23645" stroke="#f23645">(−0.13%)</tspan></text>
<text y="61.02" font-size="11.40" fill="#bcbcbc" stroke="#bcbcbc" stroke-width="0.30"><tspan x="17.50" textLength="30.13" lengthAdjust="spacingAndGlyphs">Pivots</tspan> <tspan x="51.90" textLength="55.70" lengthAdjust="spacingAndGlyphs">(Fibonacci,</tspan> <tspan x="112.70" textLength="28.20" lengthAdjust="spacingAndGlyphs">Auto)</tspan></text>
<text y="77.69" font-size="11.40" fill="#bcbcbc" stroke="#bcbcbc" stroke-width="0.30"><tspan x="17.50" textLength="20.47" lengthAdjust="spacingAndGlyphs">SMA</tspan> <tspan x="42.50" textLength="24.79" lengthAdjust="spacingAndGlyphs">(200,</tspan> <tspan x="72.40" textLength="29.87" lengthAdjust="spacingAndGlyphs">close)</tspan> <tspan x="110.00" textLength="40.30" lengthAdjust="spacingAndGlyphs" fill="#f23645" stroke="#f23645">0.64117</tspan></text>
<text y="94.36" font-size="11.40" fill="#bcbcbc" stroke="#bcbcbc" stroke-width="0.30"><tspan x="17.50" textLength="20.47" lengthAdjust="spacingAndGlyphs">SMA</tspan> <tspan x="42.50" textLength="18.73" lengthAdjust="spacingAndGlyphs">(55,</tspan> <tspan x="66.00" textLength="34.34" lengthAdjust="spacingAndGlyphs">close):</tspan> <tspan x="104.70" textLength="57.27" lengthAdjust="spacingAndGlyphs">Calculation</tspan> <tspan x="167.60" textLength="32.48" lengthAdjust="spacingAndGlyphs">failed.</tspan> <tspan x="204.90" textLength="37.94" lengthAdjust="spacingAndGlyphs">Remove</tspan> <tspan x="248.80" textLength="14.50" lengthAdjust="spacingAndGlyphs">the</tspan> <tspan x="269.00" textLength="28.49" lengthAdjust="spacingAndGlyphs">script</tspan> <tspan x="302.50" textLength="17.68" lengthAdjust="spacingAndGlyphs">and</tspan> <tspan x="325.20" textLength="38.09" lengthAdjust="spacingAndGlyphs">reapply</tspan> <tspan x="368.30" textLength="6.30" lengthAdjust="spacingAndGlyphs">it</tspan> <tspan x="378.90" textLength="9.85" lengthAdjust="spacingAndGlyphs">to</tspan> <tspan x="393.60" textLength="14.80" lengthAdjust="spacingAndGlyphs">the</tspan> <tspan x="413.60" textLength="30.61" lengthAdjust="spacingAndGlyphs">chart.</tspan></text>
<text y="111.03" font-size="11.40" fill="#bcbcbc" stroke="#bcbcbc" stroke-width="0.30"><tspan x="17.50" textLength="20.47" lengthAdjust="spacingAndGlyphs">SMA</tspan> <tspan x="42.50" textLength="24.79" lengthAdjust="spacingAndGlyphs">(100,</tspan> <tspan x="72.40" textLength="34.04" lengthAdjust="spacingAndGlyphs">close):</tspan> <tspan x="110.80" textLength="57.27" lengthAdjust="spacingAndGlyphs">Calculation</tspan> <tspan x="173.70" textLength="32.28" lengthAdjust="spacingAndGlyphs">failed.</tspan> <tspan x="211.10" textLength="38.14" lengthAdjust="spacingAndGlyphs">Remove</tspan> <tspan x="254.90" textLength="14.50" lengthAdjust="spacingAndGlyphs">the</tspan> <tspan x="275.10" textLength="28.49" lengthAdjust="spacingAndGlyphs">script</tspan> <tspan x="308.60" textLength="17.68" lengthAdjust="spacingAndGlyphs">and</tspan> <tspan x="331.30" textLength="38.09" lengthAdjust="spacingAndGlyphs">reapply</tspan> <tspan x="374.40" textLength="6.30" lengthAdjust="spacingAndGlyphs">it</tspan> <tspan x="385.00" textLength="9.85" lengthAdjust="spacingAndGlyphs">to</tspan> <tspan x="399.70" textLength="14.80" lengthAdjust="spacingAndGlyphs">the</tspan> <tspan x="419.70" textLength="30.61" lengthAdjust="spacingAndGlyphs">chart.</tspan></text>
<circle cx="1365.80" cy="754.50" r="9.3" fill="none" stroke="#ab47bc" stroke-width="2"/>
<path d="M1366.87 750.57L1361.64 754.84H1364.47L1362.17 760.17L1368.73 753.56H1365.91z" fill="#ab47bc"/>
<g>
<circle cx="1377.00" cy="754.30" r="10.2" fill="#0f0f0f"/>
<circle cx="1377.00" cy="754.30" r="9.7" fill="none" stroke="#e53945" stroke-width="2"/>
<clipPath id="f1"><circle cx="1377.00" cy="754.30" r="8"/></clipPath>
<g clip-path="url(#f1)">
<rect x="1369.00" y="746.30" width="16" height="16" fill="#ffffff"/>
<rect x="1369.00" y="746.30" width="16" height="3.50" fill="#ef5350"/>
<rect x="1369.00" y="752.60" width="16" height="3.20" fill="#ef5350"/>
<rect x="1369.00" y="759.00" width="16" height="3.50" fill="#ef5350"/>
<rect x="1369.00" y="746.30" width="10" height="9.5" fill="#1e88e5"/>
<circle cx="1371.60" cy="748.70" r="0.45" fill="#e3f2fd"/><circle cx="1371.60" cy="751.10" r="0.45" fill="#e3f2fd"/><circle cx="1371.60" cy="753.50" r="0.45" fill="#e3f2fd"/><circle cx="1374.00" cy="748.70" r="0.45" fill="#e3f2fd"/><circle cx="1374.00" cy="751.10" r="0.45" fill="#e3f2fd"/><circle cx="1374.00" cy="753.50" r="0.45" fill="#e3f2fd"/><circle cx="1376.40" cy="748.70" r="0.45" fill="#e3f2fd"/><circle cx="1376.40" cy="751.10" r="0.45" fill="#e3f2fd"/><circle cx="1376.40" cy="753.50" r="0.45" fill="#e3f2fd"/>
</g></g>
<g>
<circle cx="1400.20" cy="754.30" r="10.2" fill="#0f0f0f"/>
<circle cx="1400.20" cy="754.30" r="9.7" fill="none" stroke="#e53945" stroke-width="2"/>
<clipPath id="f2"><circle cx="1400.20" cy="754.30" r="8"/></clipPath>
<g clip-path="url(#f2)">
<rect x="1392.20" y="746.30" width="16" height="16" fill="#ffffff"/>
<rect x="1392.20" y="746.30" width="16" height="3.50" fill="#ef5350"/>
<rect x="1392.20" y="752.60" width="16" height="3.20" fill="#ef5350"/>
<rect x="1392.20" y="759.00" width="16" height="3.50" fill="#ef5350"/>
<rect x="1392.20" y="746.30" width="10" height="9.5" fill="#1e88e5"/>
<circle cx="1394.80" cy="748.70" r="0.45" fill="#e3f2fd"/><circle cx="1394.80" cy="751.10" r="0.45" fill="#e3f2fd"/><circle cx="1394.80" cy="753.50" r="0.45" fill="#e3f2fd"/><circle cx="1397.20" cy="748.70" r="0.45" fill="#e3f2fd"/><circle cx="1397.20" cy="751.10" r="0.45" fill="#e3f2fd"/><circle cx="1397.20" cy="753.50" r="0.45" fill="#e3f2fd"/><circle cx="1399.60" cy="748.70" r="0.45" fill="#e3f2fd"/><circle cx="1399.60" cy="751.10" r="0.45" fill="#e3f2fd"/><circle cx="1399.60" cy="753.50" r="0.45" fill="#e3f2fd"/>
</g></g>
<g fill="#d6d6d6">
<path d="M9.7 806h8.1v9h-4.6v-4.7h-3.5z"/>
<circle cx="20.6" cy="807.9" r="1.9"/>
<path d="M23.4 806h5.4l-3.9 9h-5.4z"/>
</g>
<text x="31.60" y="815.00" font-size="12.20" fill="#d6d6d6" stroke="#d6d6d6" stroke-width="0.00" textLength="69.00" lengthAdjust="spacingAndGlyphs" font-weight="700">TradingView</text>
</svg>
</body></html>
